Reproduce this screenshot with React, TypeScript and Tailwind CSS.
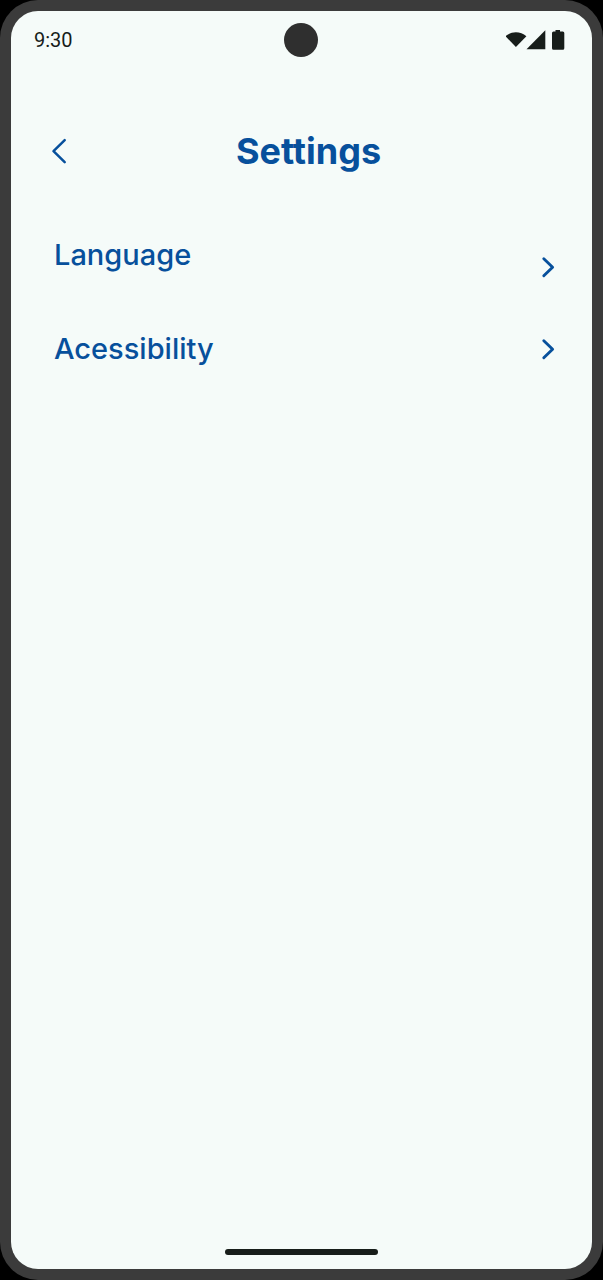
import React from "react";

function StatusBar() {
  return (
    <div className="grid h-[58px] grid-cols-3 items-center pr-6 pl-[23px] text-[#171d1a]">
      <time className="font-['Roboto',sans-serif] text-xl leading-6">9:30</time>
      <span className="size-[34px] justify-self-center rounded-full bg-[#2f2f2f]" />
      <svg
        className="h-6 w-[62px] justify-self-end"
        viewBox="0 0 62 24"
        fill="currentColor"
        role="img"
        aria-label="Wi-Fi, signal and battery"
      >
        <path d="M-.6 8.200C2.500 5.600 6 4.300 9.900 4.300S17.300 5.600 20.400 8.200L9.900 19Z" />
        <path d="M20.500 21.200H39.300V2.300Z" />
        <path d="M49.500 1.900h4.500v1.700h2.800a1.500 1.500 0 0 1 1.500 1.500v15.200a1.500 1.500 0 0 1-1.500 1.500h-9.300a1.500 1.500 0 0 1-1.500-1.500V5.100a1.500 1.500 0 0 1 1.500-1.500h2Z" />
      </svg>
    </div>
  );
}

function Header() {
  return (
    <header className="mt-[58px] grid grid-cols-[56px_1fr_26px] items-center">
      <button type="button" aria-label="Back" className="flex h-12 items-center justify-center">
        <svg
          className="h-7 w-5"
          viewBox="0 0 20 28"
          fill="none"
          stroke="currentColor"
          strokeWidth="2.500"
          strokeLinecap="round"
          strokeLinejoin="round"
        >
          <path d="M15.700 3.200 4.500 14.200 15.700 25.200" />
        </svg>
      </button>
      <h1 className="text-center text-[36px] leading-12 font-bold">Settings</h1>
    </header>
  );
}

function SettingsRow({ label, iconLow = false }: { label: string; iconLow?: boolean }) {
  return (
    <li>
      <a
        href="#"
        className={iconLow ? "flex h-16 items-end justify-between" : "flex h-16 items-center justify-between"}
      >
        <span className={iconLow ? "self-start text-[29px] leading-10 font-medium" : "text-[29px] leading-10 font-medium"}>
          {label}
        </span>
        <svg
          className={iconLow ? "mb-5 h-6 w-4" : "h-6 w-4"}
          viewBox="0 0 16 24"
          fill="none"
          stroke="currentColor"
          strokeWidth="2.900"
          strokeLinecap="round"
          strokeLinejoin="round"
        >
          <path d="M3.800 3.800 12.600 12.200 3.800 20.800" />
        </svg>
      </a>
    </li>
  );
}

export default function App() {
  return (
    <div className="min-h-screen bg-black font-['Inter',sans-serif] text-[#07509c]">
      <div className="flex min-h-screen flex-col rounded-[38px] bg-[#3b3b3b] p-[11px]">
        <main className="flex flex-1 flex-col rounded-[27px] bg-[#f5fbf9]">
          <StatusBar />
          <div className="flex-1 pr-9 pl-5">
            <Header />
            <ul className="mt-[60px] flex flex-col gap-[18px] pl-[23px]">
              <SettingsRow label="Language" iconLow />
              <SettingsRow label="Acessibility" />
            </ul>
          </div>
          <div className="mx-auto mb-[14px] h-[6px] w-[153px] rounded-full bg-[#171d1a]" />
        </main>
      </div>
    </div>
  );
}
